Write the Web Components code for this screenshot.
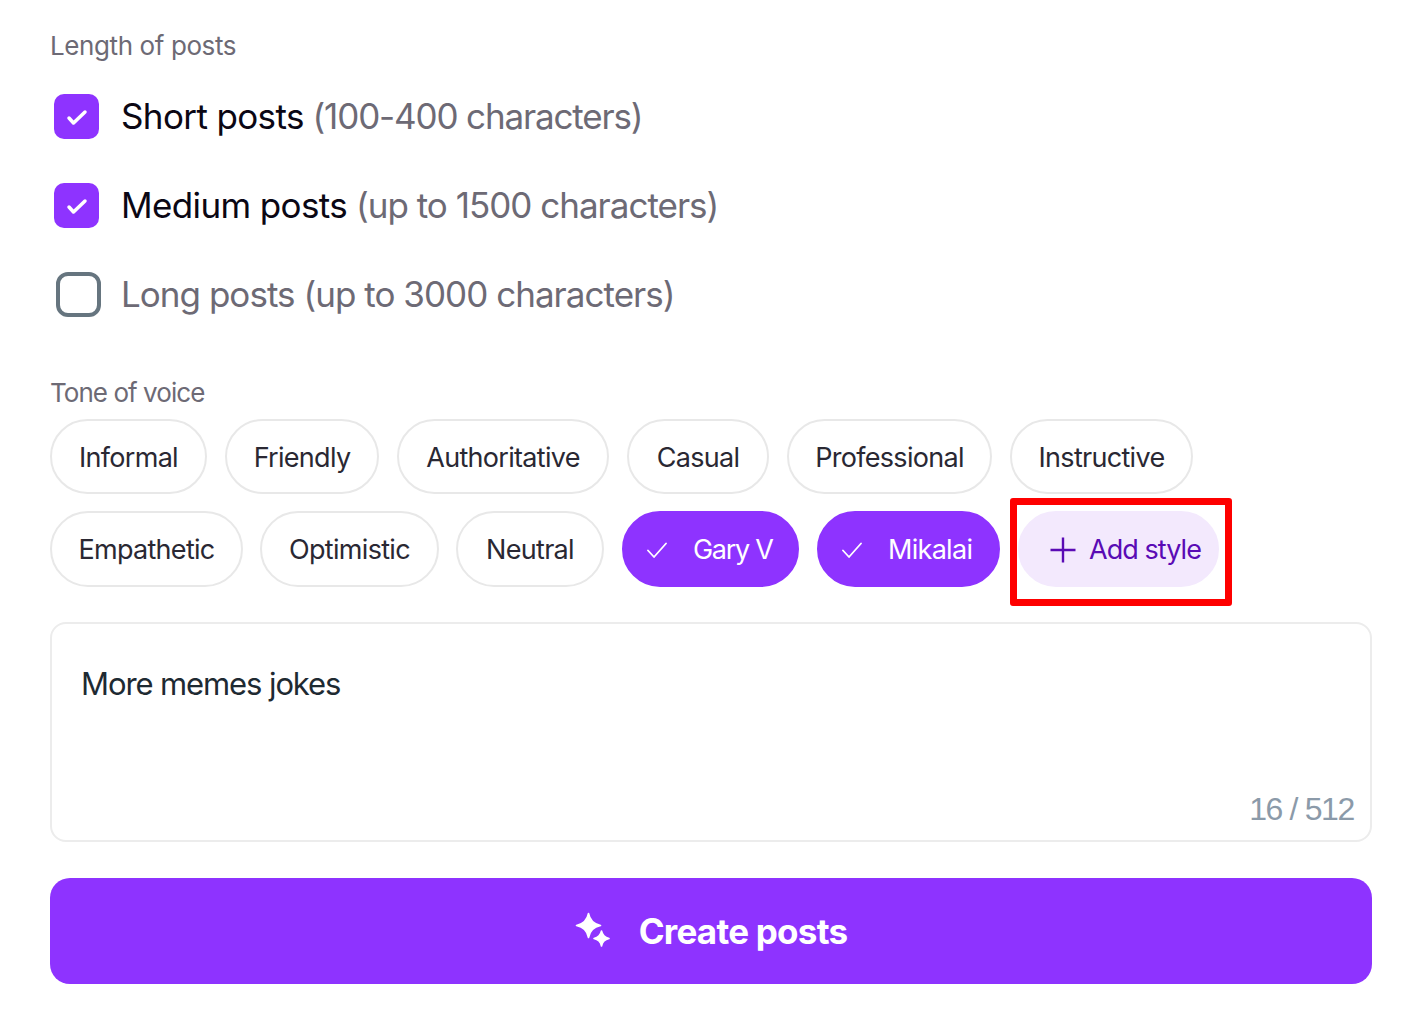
<!DOCTYPE html>
<html>
<head>
<meta charset="utf-8">
<style>
  html, body { margin: 0; background: #fff; }
  body { font-family: Inter, "Liberation Sans", sans-serif; }
</style>
</head>
<body>
<post-form></post-form>
<script>
class LengthOption extends HTMLElement {
    constructor() {
        super();
        this.attachShadow({ mode: "open" });
        this.shadowRoot.innerHTML = `
        <style>
          :host { display: flex; align-items: center; height: 89px; font-size: 35px; letter-spacing: -0.97px; color: #6d6a75; }
          .box { width: 45px; height: 45px; margin-left: 4px; margin-right: 23px; border-radius: 10px; background: #8e33ff; color: #fff; display: flex; align-items: center; justify-content: center; box-sizing: border-box; flex: none; }
          .box svg { width: 25px; height: 25px; stroke-width: 3.5; }
          .text { position: relative; top: -1px; margin-left: -1px; }
          :host(:not([checked])) .box { background: none; border: 4px solid #66757f; border-radius: 12px; margin-left: 6px; margin-right: 21px; }
          :host(:not([checked])) svg { display: none; }
          ::slotted(b) { font-weight: 400; color: #0b0714; letter-spacing: -0.62px; }
        </style>
        <span class="box"><svg viewBox="0 0 25 25" fill="none" stroke="currentColor" stroke-linecap="round" stroke-linejoin="round"><path d="M5 14l4.500 5L21 8"/></svg></span>
        <span class="text"><slot></slot></span>`;
    }
}

class ToneChip extends HTMLElement {
    constructor() {
        super();
        this.attachShadow({ mode: "open" });
        const on = this.hasAttribute("selected");
        const add = this.hasAttribute("add");
        let icon = "";
        if (on) icon = `<svg viewBox="0 0 20 20" fill="none" stroke="currentColor" stroke-linecap="round" stroke-linejoin="round"><path d="M1 10.500l6 6.500L19 3.500"/></svg>`;
        if (add) icon = `<svg viewBox="0 0 26 26" fill="none" stroke="currentColor"><path d="M13 0.500v25M0.500 13h25"/></svg>`;
        this.shadowRoot.innerHTML = `
        <style>
          :host { display: inline-flex; align-items: center; justify-content: center; box-sizing: border-box; height: 75px; padding: 1px 0 0; border: 2px solid #e8e8e8; border-radius: 38px; font-size: 27px; letter-spacing: -0.7px; color: #2a2833; white-space: nowrap; }
          :host([selected]) { background: #8e33ff; border-color: #8e33ff; color: #fff; padding-left: 23px; justify-content: flex-start; }
          :host([add]) { background: #f3e9fd; border-color: #f3e9fd; color: #5a0bb5; padding-left: 30px; justify-content: flex-start; letter-spacing: -0.95px; }
          svg { flex: none; }
          :host([selected]) svg { width: 20px; height: 20px; stroke-width: 1.8; margin-right: 26px; }
          :host([add]) svg { width: 26px; height: 26px; stroke-width: 2.4; margin-right: 13px; }
        </style>
        ${icon}<slot></slot>`;
    }
}

class MessageBox extends HTMLElement {
    constructor() {
        super();
        this.attachShadow({ mode: "open" });
        this.shadowRoot.innerHTML = `
        <style>
          :host { display: block; position: relative; box-sizing: border-box; height: 220px; padding: 39px 29px; border: 2px solid #ececec; border-radius: 16px; font-size: 31px; letter-spacing: -1.1px; line-height: 42px; color: #1e2a32; }
          .count { position: absolute; right: 16px; bottom: 11px; font: 32px/40px "Liberation Sans", sans-serif; letter-spacing: -1.35px; color: #8b9aa9; }
        </style>
        <slot></slot><span class="count"><slot name="count"></slot></span>`;
    }
}

class CreateButton extends HTMLElement {
    constructor() {
        super();
        this.attachShadow({ mode: "open" });
        this.shadowRoot.innerHTML = `
        <style>
          :host { display: flex; align-items: center; justify-content: center; height: 106px; border-radius: 20px; background: #8e33ff; color: #fff; font-size: 35px; font-weight: 700; letter-spacing: -0.75px; }
          svg { width: 36px; height: 36px; margin-right: 28px; margin-top: -2px; }
        </style>
        <svg viewBox="0 0 36 36" fill="#fff" stroke="#fff" stroke-width="1.6" stroke-linejoin="round"><path d="M13.500 1.500C14.700 8 18 12 25.500 13.500 18 15 14.700 19 13.500 25.500 12.300 19 9 15 1.500 13.500 9 12 12.300 8 13.500 1.500z"/><path d="M26.500 19C27.300 23 29.500 25.500 34 26.500 29.500 27.500 27.300 30 26.500 34 25.700 30 23.500 27.500 19 26.500 23.500 25.500 25.700 23 26.500 19z"/></svg>
        <slot></slot>`;
    }
}

class PostForm extends HTMLElement {
    constructor() {
        super();
        this.attachShadow({ mode: "open" });
        this.shadowRoot.innerHTML = `
        <style>
          :host { display: block; position: relative; box-sizing: border-box; width: 1408px; height: 1032px; padding: 28px 36px 0 50px; }
          .label { font-size: 26px; line-height: 36px; letter-spacing: -0.4px; color: #6d6a75; }
          .tone-label { letter-spacing: -0.95px; }
          .lengths { margin-top: 8px; margin-bottom: 36px; }
          .row { display: flex; gap: 18px; margin-bottom: 17px; }
          .row.second { gap: 17px; margin-bottom: 35px; }
          .row.second tone-chip { height: 76px; }
          .row.second tone-chip[selected], .row.second tone-chip[add] { margin-left: 1px; }
          .tones { margin-top: 8px; }
          create-button { margin-top: 36px; }
          .mark { position: absolute; left: 1010px; top: 498px; width: 222px; height: 108px; box-sizing: border-box; border: 7px solid #fe0000; border-radius: 3px; }
        </style>
        <div class="label">Length of posts</div>
        <div class="lengths">
          <length-option checked style="letter-spacing:-1.15px"><b>Short posts</b> (100-400 characters)</length-option>
          <length-option checked style="letter-spacing:-1px"><b>Medium posts</b> (up to 1500 characters)</length-option>
          <length-option>Long posts (up to 3000 characters)</length-option>
        </div>
        <div class="label tone-label">Tone of voice</div>
        <div class="tones">
          <div class="row">
            <tone-chip style="width:157px">Informal</tone-chip>
            <tone-chip style="width:154px">Friendly</tone-chip>
            <tone-chip style="width:212px">Authoritative</tone-chip>
            <tone-chip style="width:142px">Casual</tone-chip>
            <tone-chip style="width:205px">Professional</tone-chip>
            <tone-chip style="width:183px">Instructive</tone-chip>
          </div>
          <div class="row second">
            <tone-chip style="width:193px">Empathetic</tone-chip>
            <tone-chip style="width:179px">Optimistic</tone-chip>
            <tone-chip style="width:148px">Neutral</tone-chip>
            <tone-chip selected style="width:177px;letter-spacing:-1.3px">Gary V</tone-chip>
            <tone-chip selected style="width:183px">Mikalai</tone-chip>
            <tone-chip add style="width:201px">Add style</tone-chip>
          </div>
        </div>
        <message-box>More memes jokes<span slot="count">16 / 512</span></message-box>
        <create-button>Create posts</create-button>
        <div class="mark"></div>`;
    }
}

customElements.define("length-option", LengthOption);
customElements.define("tone-chip", ToneChip);
customElements.define("message-box", MessageBox);
customElements.define("create-button", CreateButton);
customElements.define("post-form", PostForm);
</script>
</body>
</html>
